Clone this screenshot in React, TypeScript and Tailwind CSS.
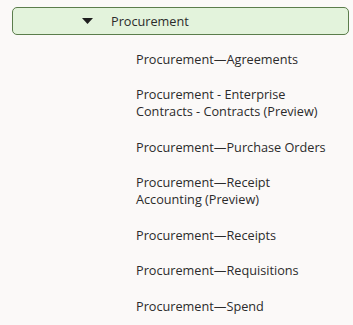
export default function App() {
  const items = [
    ['Procurement—Agreements'],
    ['Procurement - Enterprise', 'Contracts - Contracts (Preview)'],
    ['Procurement—Purchase Orders'],
    ['Procurement—Receipt', 'Accounting (Preview)'],
    ['Procurement—Receipts'],
    ['Procurement—Requisitions'],
    ['Procurement—Spend'],
  ];

  return (
    <div className="w-[353px] h-[325px] bg-[#fbf9f8] pt-[7px] text-[12.7px] text-[#2b2b2b] font-['Open_Sans',sans-serif] overflow-hidden">
      {/* Expanded group header */}
      <div className="ml-[12px] w-[337px] h-[28px] rounded-[5px] border border-[#5b7d4c] bg-[#e3f3dc] flex items-center">
        <svg className="ml-[69px] w-[11px] h-[6px]" viewBox="0 0 11 6">
          <polygon points="0,0 11,0 5.5,6" fill="#1f1f1f" />
        </svg>
        <span className="ml-[18px] leading-[17px]">Procurement</span>
      </div>

      {/* Child links */}
      <div className="pl-[136px] pt-[15.5px] flex flex-col gap-[18.6px]">
        {items.map((lines, i) => (
          <div key={i} className="leading-[17px]">
            {lines.map((l, j) => (
              <div key={j}>{l}</div>
            ))}
          </div>
        ))}
      </div>
    </div>
  );
}
